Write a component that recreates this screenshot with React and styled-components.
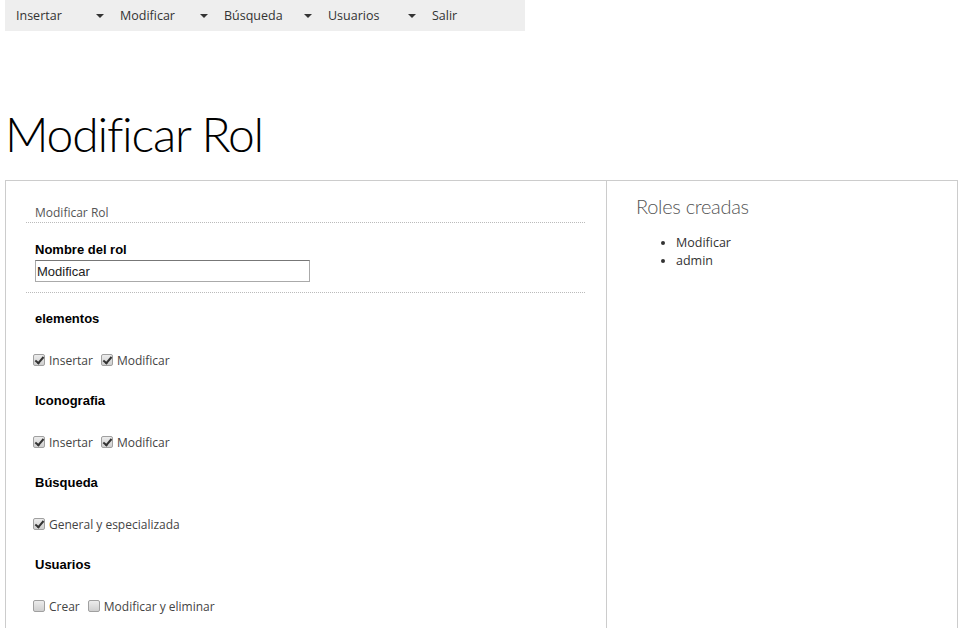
import React from "react";
import styled, { createGlobalStyle } from "styled-components";

const Global = createGlobalStyle`
  html, body { margin: 0; padding: 0; background: #fff; }
  body { font-family: "Open Sans", "Liberation Sans", sans-serif; color: #333; }
`;

const Page = styled.div`
  padding-left: 5px;
`;

const Nav = styled.nav`
  width: 520px;
  height: 31px;
  background: #eeeeee;
  display: flex;
  align-items: center;
  padding-left: 11px;
  box-sizing: border-box;
  overflow: hidden;
`;

const NavItem = styled.div`
  flex: 0 0 104px;
  display: flex;
  align-items: center;
  justify-content: space-between;
  padding-right: 16px;
  box-sizing: border-box;
  font-size: 12.5px;
  color: #333;
`;

const Caret = styled.span`
  width: 0;
  height: 0;
  border-left: 4px solid transparent;
  border-right: 4px solid transparent;
  border-top: 4px solid #333;
`;

const Title = styled.h1`
  margin: 75px 0 0 0;
  height: 74px;
  font-family: "Lato", sans-serif;
  font-weight: 300;
  font-size: 48px;
  line-height: 56px;
  color: #000;
  letter-spacing: -1.2px;
`;

const Panel = styled.div`
  width: 953px;
  box-sizing: border-box;
  border: 1px solid #cccccc;
  border-bottom: none;
  display: grid;
  grid-template-columns: 601px 1fr;
  min-height: 448px;
`;

const LeftCol = styled.div`
  border-right: 1px solid #cccccc;
  padding: 0 21px 0 20px;
`;

const RightCol = styled.div`
  padding: 12px 0 0 29px;
`;

const Legend = styled.div`
  margin-top: 23px;
  padding-left: 9px;
  font-size: 12px;
  line-height: 18px;
  color: #555;
  border-bottom: 1px dotted #bbb;
`;

const Field = styled.div`
  padding: 18px 0 10px 9px;
  border-bottom: 1px dotted #bbb;
`;

const Label = styled.div`
  font-family: "Liberation Sans", Arial, sans-serif;
  font-weight: bold;
  font-size: 13px;
  line-height: 18px;
  color: #000;
`;

const TextInput = styled.input`
  display: block;
  width: 275px;
  height: 22px;
  box-sizing: border-box;
  margin-top: 1px;
  padding: 0 1px;
  border: 1px solid #aaa;
  border-top-color: #777;
  font-family: "Liberation Sans", Arial, sans-serif;
  font-size: 13px;
  color: #222;
  outline: none;
`;

const Groups = styled.div`
  display: flex;
  flex-direction: column;
  gap: 24px;
  padding: 17px 0 0 9px;
`;

const Group = styled.div`
  display: flex;
  flex-direction: column;
  gap: 22px;
`;

const Row = styled.div`
  display: flex;
  align-items: center;
  height: 18px;
  margin-left: -2px;
`;

const Check = styled.label`
  display: flex;
  align-items: center;
  font-size: 12px;
  color: #444;
  margin-right: 8px;
  margin-top: 2px;
`;

const Box = styled.input`
  appearance: none;
  width: 12px;
  height: 12px;
  margin: 0 4px 0 0;
  border: 1px solid #a0a0a0;
  border-radius: 2px;
  background: linear-gradient(#ececec, #cfcfcf);
  position: relative;
  box-sizing: border-box;
  &:checked::after {
    content: "";
    position: absolute;
    left: 3px;
    top: 0px;
    width: 3px;
    height: 7px;
    border: solid #333;
    border-width: 0 2px 2px 0;
    transform: rotate(40deg);
  }
`;

const SideTitle = styled.h2`
  margin: 0;
  font-family: "Lato", sans-serif;
  font-weight: 300;
  font-size: 20px;
  line-height: 26px;
  color: #555;
  letter-spacing: -0.3px;
`;

const List = styled.ul`
  margin: 15px 0 0 0;
  padding-left: 40px;
  font-size: 12.5px;
  line-height: 18px;
  color: #333;
`;

const menu = ["Insertar", "Modificar", "Búsqueda", "Usuarios"];

const groups = [
  { title: "elementos", items: [["Insertar", true], ["Modificar", true]] },
  { title: "Iconografia", items: [["Insertar", true], ["Modificar", true]] },
  { title: "Búsqueda", items: [["General y especializada", true]] },
  { title: "Usuarios", items: [["Crear", false], ["Modificar y eliminar", false]] },
];

export default function App() {
  return (
    <Page>
      <Global />
      <Nav>
        {menu.map((m) => (
          <NavItem key={m}>
            {m}
            <Caret />
          </NavItem>
        ))}
        <NavItem>Salir</NavItem>
      </Nav>
      <Title>Modificar Rol</Title>
      <Panel>
        <LeftCol>
          <Legend>Modificar Rol</Legend>
          <Field>
            <Label>Nombre del rol</Label>
            <TextInput defaultValue="Modificar" />
          </Field>
          <Groups>
            {groups.map((g) => (
              <Group key={g.title}>
                <Label>{g.title}</Label>
                <Row>
                  {g.items.map(([t, c]) => (
                    <Check key={t}>
                      <Box type="checkbox" defaultChecked={c} />
                      {t}
                    </Check>
                  ))}
                </Row>
              </Group>
            ))}
          </Groups>
        </LeftCol>
        <RightCol>
          <SideTitle>Roles creadas</SideTitle>
          <List>
            <li>Modificar</li>
            <li>admin</li>
          </List>
        </RightCol>
      </Panel>
    </Page>
  );
}
